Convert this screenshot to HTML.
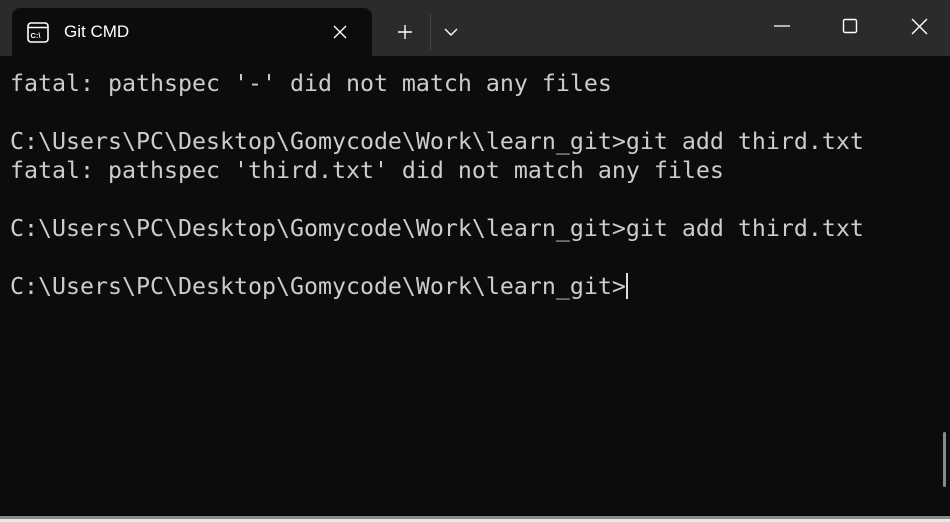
<!DOCTYPE html>
<html><head><style>
body{margin:0;width:950px;height:522px;background:#0c0c0c;overflow:hidden;position:relative;font-family:"Liberation Sans",sans-serif}
.bar{position:absolute;left:0;top:0;width:950px;height:56px;background:#2b2b2b}
.tab{position:absolute;left:12px;top:8px;width:360px;height:48px;background:#0c0c0c;border-radius:8px 8px 0 0}
.title{position:absolute;left:64px;top:22px;color:#fff;font-size:17px}
.term{position:absolute;left:10px;top:69px;font-family:"DejaVu Sans Mono","Liberation Mono",monospace;font-size:23.25px;line-height:29px;color:#cccccc;white-space:pre}
.cur{display:inline-block;width:2px;height:26px;background:#ddd;vertical-align:top;margin-top:1px;line-height:0}
.sb{position:absolute;left:943px;top:432px;width:3px;height:55px;background:#8a8a8a;border-radius:2px}
.bot{position:absolute;left:0;top:516px;width:950px;height:3px;background:#8a8a8a}
.bot2{position:absolute;left:0;top:519px;width:950px;height:3px;background:#e8e8e8}
</style></head><body>
<div class="bar"></div>
<div class="tab"></div>
<svg style="position:absolute;left:27px;top:22px" width="22" height="21" viewBox="0 0 22 21"><rect x="1" y="1" width="20" height="19" rx="3" fill="none" stroke="#fff" stroke-width="1.6"/><line x1="1" y1="5.5" x2="21" y2="5.5" stroke="#fff" stroke-width="1.4"/><text x="3.5" y="16" fill="#fff" font-size="7.5" font-family="Liberation Sans" font-weight="bold">C:\</text></svg>
<div class="title">Git CMD</div>
<svg style="position:absolute;left:333px;top:25px" width="14" height="14"><path d="M1 1L13 13M13 1L1 13" stroke="#fff" stroke-width="1.4"/></svg>
<svg style="position:absolute;left:397px;top:24px" width="16" height="16"><path d="M8 1V15M1 8H15" stroke="#fff" stroke-width="1.4"/></svg>
<div style="position:absolute;left:430px;top:14px;width:1px;height:36px;background:#444"></div>
<svg style="position:absolute;left:444px;top:27px" width="14" height="10"><path d="M1 2L7 8L13 2" stroke="#fff" stroke-width="1.4" fill="none"/></svg>
<svg style="position:absolute;left:773px;top:18px" width="18" height="18"><path d="M1 8H17" stroke="#fff" stroke-width="1.3"/></svg>
<svg style="position:absolute;left:842px;top:18px" width="18" height="18"><rect x="1.5" y="1.5" width="13" height="13" rx="1.5" fill="none" stroke="#fff" stroke-width="1.4"/></svg>
<svg style="position:absolute;left:911px;top:18px" width="18" height="18"><path d="M1 1L16 16M16 1L1 16" stroke="#fff" stroke-width="1.4"/></svg>
<div class="term">fatal: pathspec '-' did not match any files

C:\Users\PC\Desktop\Gomycode\Work\learn_git>git add third.txt
fatal: pathspec 'third.txt' did not match any files

C:\Users\PC\Desktop\Gomycode\Work\learn_git>git add third.txt

C:\Users\PC\Desktop\Gomycode\Work\learn_git><span class="cur"></span></div>
<div class="sb"></div>
<div class="bot"></div><div class="bot2"></div>
</body></html>
